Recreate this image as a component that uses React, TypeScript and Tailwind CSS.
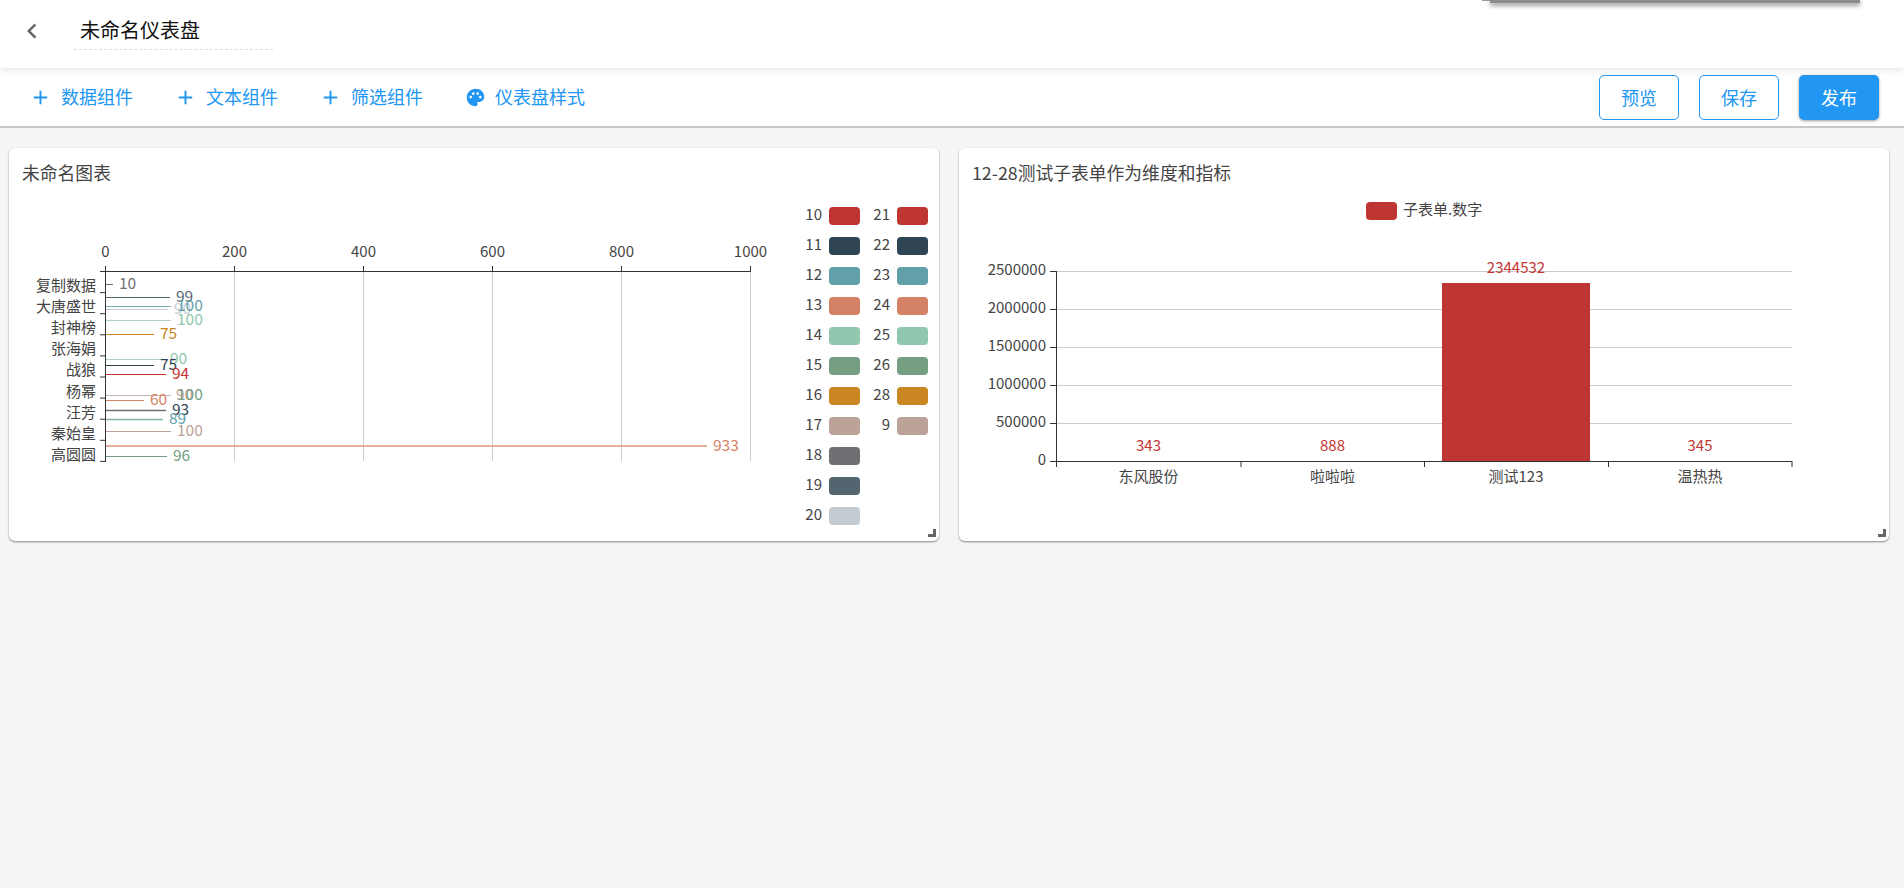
const blue = "#2196f3"
const red = "#bf3532"
const axisColor = "#333"
const textColor = "#444"

const categories = ["复制数据", "大唐盛世", "封神榜", "张海娟", "战狼", "杨幂", "汪芳", "秦始皇", "高圆圆"]

// [y, end x, line colour, label, label colour, line width]
const hBars: [number, number, string, string, string, number][] = [
    [284.5, 113, "#6e7074", "10", "#6e7074", 1],
    [297.5, 170, "#546570", "99", "#546570", 1],
    [309.5, 168, "#c4ccd3", "90", "#c4ccd3", 1],
    [306.5, 171, "#7fb3b0", "100", "#61a0a8", 1],
    [320.5, 171, "#aed2c5", "100", "#91c7ae", 1],
    [334.5, 154, "#ca8622", "75", "#ca8622", 1],
    [359.5, 164, "#b5cfc4", "90", "#91c7ae", 1],
    [365.5, 154, "#2f4554", "75", "#2f4554", 1],
    [374.5, 166, "#c23531", "94", "#c23531", 1],
    [395.5, 170, "#bda29a", "90", "#bda29a", 1],
    [395.5, 171, "#c4b4ab", "100", "#749f83", 1],
    [400.5, 144, "#d48265", "60", "#d48265", 1],
    [410.5, 166, "#6e7074", "93", "#2f4554", 1.5],
    [419.5, 163, "#86b5ad", "89", "#61a0a8", 1.5],
    [431.5, 171, "#bda29a", "100", "#bda29a", 1],
    [446, 707, "#e6ad9a", "933", "#d48265", 2],
    [456.5, 167, "#749f83", "96", "#749f83", 1],
]

const legendLeft = [
    ["10", red], ["11", "#2f4554"], ["12", "#61a0a8"], ["13", "#d48265"], ["14", "#91c7ae"], ["15", "#749f83"],
    ["16", "#ca8622"], ["17", "#bda29a"], ["18", "#6e7074"], ["19", "#546570"], ["20", "#c4ccd3"],
]
const legendRight = [
    ["21", red], ["22", "#2f4554"], ["23", "#61a0a8"], ["24", "#d48265"], ["25", "#91c7ae"], ["26", "#749f83"],
    ["28", "#ca8622"], ["9", "#bda29a"],
]

const PlusIcon = () => (
    <svg viewBox="0 0 24 24" className="w-[23px] h-[23px]" fill={blue}>
        <path d="M19 13h-6v6h-2v-6H5v-2h6V5h2v6h6v2z" />
    </svg>
)

const PaletteIcon = () => (
    <svg viewBox="0 0 24 24" className="w-[21px] h-[21px]" fill={blue}>
        <path d="M12 2C6.49 2 2 6.49 2 12s4.49 10 10 10c1.38 0 2.5-1.12 2.5-2.5 0-.61-.23-1.2-.64-1.67-.08-.1-.13-.21-.13-.33 0-.28.22-.5.5-.5H16c3.31 0 6-2.69 6-6 0-4.96-4.49-9-10-9zm5.5 11c-.83 0-1.5-.67-1.5-1.5s.67-1.5 1.5-1.5 1.5.67 1.5 1.5-.67 1.5-1.5 1.5zm-3-4c-.83 0-1.5-.67-1.5-1.5S13.67 6 14.5 6s1.5.67 1.5 1.5S15.33 9 14.5 9zM5 11.5c0-.83.67-1.5 1.5-1.5s1.5.67 1.5 1.5S7.33 13 6.5 13 5 12.33 5 11.5zm6-4c0 .83-.67 1.5-1.5 1.5S8 8.33 8 7.5 8.67 6 9.5 6s1.5.67 1.5 1.5z" />
    </svg>
)

const ToolItem = ({ icon, label }: { icon: React.ReactNode; label: string }) => (
    <div className="flex items-center gap-[9px] text-[18px] text-[#2196f3]">
        {icon}
        <span className="-mt-[2px]">{label}</span>
    </div>
)

const Card = ({ title, children }: { title: string; children: React.ReactNode }) => (
    <div className="relative w-[930px] h-[393px] bg-white rounded-[6px] shadow-[0_1px_2px_rgba(0,0,0,0.45)]">
        <div className="h-[48px] pl-[13px] pt-[12px] text-[17.8px] leading-[25px] text-[#444]">{title}</div>
        {children}
        <div className="absolute right-[3px] bottom-[4px] w-[8px] h-[8px] border-r-[3px] border-b-[3px] border-[#666]" />
    </div>
)

const HorizontalChart = () => (
    <svg viewBox="9 196 930 345" className="block w-[930px] h-[345px] text-[15px]">
        {[0, 200, 400, 600, 800, 1000].map((v) => {
            const x = 105.5 + v * 0.645
            return (
                <g key={v}>
                    {v > 0 && <line x1={x} x2={x} y1={272} y2={461} stroke="#ccc" />}
                    <line x1={x} x2={x} y1={266} y2={272} stroke={axisColor} />
                    <text x={x} y={253} textAnchor="middle" dominantBaseline="middle" fill={textColor}>{v}</text>
                </g>
            )
        })}
        <line x1={105.5} x2={751} y1={271.5} y2={271.5} stroke={axisColor} />
        <line x1={105.5} x2={105.5} y1={271} y2={462} stroke={axisColor} />
        {categories.map((name, i) => (
            <text key={name} x={96} y={286.5 + i * 21.2} textAnchor="end" dominantBaseline="middle" fill={textColor}>{name}</text>
        ))}
        {Array.from({ length: 10 }).map((_, i) => (
            <line key={i} x1={100} x2={105.5} y1={271.5 + i * 21.1} y2={271.5 + i * 21.1} stroke={axisColor} />
        ))}
        {hBars.map(([y, end, color, label, labelColor, width], i) => (
            <g key={i}>
                <line x1={106} x2={end} y1={y} y2={y} stroke={color} strokeWidth={width} />
                <text x={end + 6} y={y + 0.5} dominantBaseline="middle" className="text-[15.5px]" fill={labelColor}>{label}</text>
            </g>
        ))}
        {legendLeft.map(([name, color], i) => (
            <g key={name}>
                <text x={822} y={216 + i * 30} textAnchor="end" dominantBaseline="middle" fill={textColor}>{name}</text>
                <rect x={829} y={207 + i * 30} width={31} height={18} rx={4} fill={color} />
            </g>
        ))}
        {legendRight.map(([name, color], i) => (
            <g key={name}>
                <text x={890} y={216 + i * 30} textAnchor="end" dominantBaseline="middle" fill={textColor}>{name}</text>
                <rect x={897} y={207 + i * 30} width={31} height={18} rx={4} fill={color} />
            </g>
        ))}
    </svg>
)

const BarChart = () => (
    <svg viewBox="959 196 930 345" className="block w-[930px] h-[345px] text-[15px]">
        <rect x={1366} y={202} width={31} height={18} rx={4} fill={red} />
        <text x={1403} y={210.5} dominantBaseline="middle" fill={textColor}>子表单.数字</text>
        {[0, 500000, 1000000, 1500000, 2000000, 2500000].map((v, i) => {
            const y = 461.5 - i * 38
            return (
                <g key={v}>
                    {v > 0 && <line x1={1056} x2={1792} y1={y} y2={y} stroke="#ccc" />}
                    <line x1={1050} x2={1056} y1={y} y2={y} stroke={axisColor} />
                    <text x={1046} y={y - 1} textAnchor="end" dominantBaseline="middle" fill={textColor}>{v}</text>
                </g>
            )
        })}
        <rect x={1442} y={283} width={148} height={179} fill={red} />
        <line x1={1056.5} x2={1056.5} y1={271} y2={467} stroke={axisColor} />
        <line x1={1056} x2={1792} y1={461.5} y2={461.5} stroke={axisColor} />
        {[1056.5, 1241, 1424.5, 1608.5, 1792].map((x) => (
            <line key={x} x1={x} x2={x} y1={461} y2={467} stroke={axisColor} />
        ))}
        {[
            [1148.5, "东风股份", "343", 446.5],
            [1332.5, "啦啦啦", "888", 446.5],
            [1516, "测试123", "2344532", 269],
            [1700, "温热热", "345", 446.5],
        ].map(([x, name, value, y]) => (
            <g key={name as string}>
                <text x={x as number} y={y as number} textAnchor="middle" dominantBaseline="middle" fill="#c23531">{value}</text>
                <text x={x as number} y={478} textAnchor="middle" dominantBaseline="middle" fill={textColor}>{name}</text>
            </g>
        ))}
    </svg>
)

export default function App() {
    return (
        <div className="relative min-h-screen overflow-hidden bg-[#f4f5f7] font-['Noto_Sans_CJK_SC','Noto_Sans',sans-serif]">
            <header className="relative z-10 h-[68px] bg-white flex items-center shadow-[0_2px_8px_rgba(0,0,0,0.1)]">
                <svg viewBox="0 0 24 24" className="ml-[17px] w-[30px] h-[30px] -mt-[6px]" fill="#666">
                    <path d="M15.41 7.41L14 6l-6 6 6 6 1.41-1.41L10.83 12z" />
                </svg>
                <div className="ml-[27px] w-[199px] h-[34px] -mt-[2px] pl-[6px] text-[20px] leading-[28px] text-[#111] border-b border-dashed border-[#ddd]">未命名仪表盘</div>
            </header>
            <div className="absolute left-[1482px] top-0 z-20 w-[8px] h-px bg-[#999]" />
            <div className="absolute left-[1490px] top-0 z-20 w-[370px] h-[3px] bg-[#8c8c8c] shadow-[0_2px_5px_rgba(0,0,0,0.6)]" />
            <div className="h-[60px] bg-white border-b-2 border-[#c8c8c8] flex items-center justify-between pl-[29px] pr-[25px]">
                <div className="flex items-center gap-[41px]">
                    <ToolItem icon={<PlusIcon />} label="数据组件" />
                    <ToolItem icon={<PlusIcon />} label="文本组件" />
                    <ToolItem icon={<PlusIcon />} label="筛选组件" />
                    <div className="ml-[1px]">
                        <ToolItem icon={<PaletteIcon />} label="仪表盘样式" />
                    </div>
                </div>
                <div className="flex items-center gap-[20px]">
                    <button className="w-[80px] h-[45px] rounded-[5px] border border-[#2196f3] text-[18px] text-[#2196f3]">预览</button>
                    <button className="w-[80px] h-[45px] rounded-[5px] border border-[#2196f3] text-[18px] text-[#2196f3]">保存</button>
                    <button className="w-[80px] h-[45px] rounded-[5px] bg-[#2196f3] text-[18px] text-white shadow-[0_1px_3px_rgba(0,0,0,0.4)]">发布</button>
                </div>
            </div>
            <main className="flex gap-[20px] pl-[9px] pt-[20px]">
                <Card title="未命名图表">
                    <HorizontalChart />
                </Card>
                <Card title="12-28测试子表单作为维度和指标">
                    <BarChart />
                </Card>
            </main>
        </div>
    )
}
